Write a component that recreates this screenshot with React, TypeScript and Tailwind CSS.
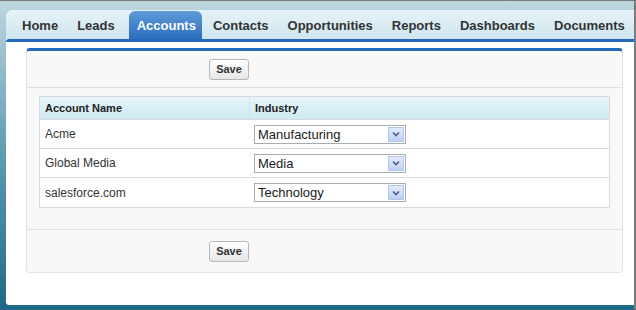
import React from 'react'

const tabs = ['Home', 'Leads', 'Accounts', 'Contacts', 'Opportunities', 'Reports', 'Dashboards', 'Documents']

const rows = [
  { name: 'Acme', industry: 'Manufacturing' },
  { name: 'Global Media', industry: 'Media' },
  { name: 'salesforce.com', industry: 'Technology' },
]

function SaveButton() {
  return (
    <button className="h-[21px] w-[40px] rounded-[3px] border border-[#b5b5b5] bg-gradient-to-b from-white to-[#e6e6e6] text-[11px] font-bold text-[#333] leading-none">
      Save
    </button>
  )
}

function Select({ value }: { value: string }) {
  return (
    <div className="flex h-[19px] w-[152px] items-stretch border border-[#a5acb2] bg-white">
      <span className="flex-1 pl-[3px] text-[13px] leading-[17px] text-[#1a1a1a]">{value}</span>
      <span className="m-px flex w-[16px] items-center justify-center border border-[#b3c5ea] bg-gradient-to-b from-[#e3ebfc] to-[#bccff5]">
        <svg width="8" height="6" viewBox="0 0 8 6">
          <path d="M1 1.5 L4 4.5 L7 1.5" fill="none" stroke="#4d5f84" strokeWidth="1.6" />
        </svg>
      </span>
    </div>
  )
}

export default function App() {
  return (
    <div
      className="flex h-[310px] w-[636px] flex-col border-t border-r-2 border-[#7a7a7a] bg-gradient-to-b from-[#bcd6df] via-[#5d9bb1] to-[#1b6a87] pt-[9px] pl-[6px] pb-[5px]"
      style={{ fontFamily: '"Liberation Sans", Arial, sans-serif' }}
    >
      <div className="flex flex-1 flex-col overflow-hidden rounded-tl-[7px] rounded-bl-[3px] bg-white">
        <div className="flex h-[29px] items-end gap-[3px] bg-gradient-to-b from-[#e6f3f8] to-[#cfe5ee] pl-[8px]">
          {tabs.map((t) => (
            <div
              key={t}
              className={
                t === 'Accounts'
                  ? 'ml-[3px] flex h-[28px] items-center rounded-t-[6px] bg-gradient-to-b from-[#5f9bd9] to-[#2b6dbc] pl-[8px] pr-[6px] pt-[2px] text-[13px] font-bold text-white'
                  : 'flex h-[28px] items-center px-[8px] pt-[2px] text-[13px] font-bold text-[#333]'
              }
            >
              {t}
            </div>
          ))}
        </div>
        <div className="h-[3px] rounded-tl-[3px] bg-[#2369bb]" />
        <div className="ml-[20px] mr-[11px] mt-[6px] rounded-[4px] border border-t-[3px] border-[#e1e3e5] border-t-[#2369bb] bg-[#f8f8f8]">
          <div className="flex h-[37px] items-center border-b border-[#e0e0e0] pl-[182px]">
            <SaveButton />
          </div>
          <div className="mx-[12px] mt-[8px] border border-[#d7dbdd] bg-white text-[12px] text-[#333]">
            <div className="flex h-[23px] items-center border-b border-[#d7dbdd] bg-gradient-to-b from-[#e6f4fa] to-[#cfe9f4] text-[11px] font-bold text-[#222]">
              <div className="flex h-full w-[210px] items-center border-r border-[#d2e2ea] pl-[5px]">Account Name</div>
              <div className="pl-[5px]">Industry</div>
            </div>
            {rows.map((r, i) => (
              <div key={r.name} className={'flex h-[29px] items-center ' + (i < rows.length - 1 ? 'border-b border-[#d7dbdd]' : '')}>
                <div className="w-[210px] pl-[5px]">{r.name}</div>
                <div className="pl-[4px]">
                  <Select value={r.industry} />
                </div>
              </div>
            ))}
          </div>
          <div className="mt-[21px] flex h-[43px] items-center border-t border-[#e0e0e0] pl-[182px]">
            <SaveButton />
          </div>
        </div>
      </div>
    </div>
  )
}
